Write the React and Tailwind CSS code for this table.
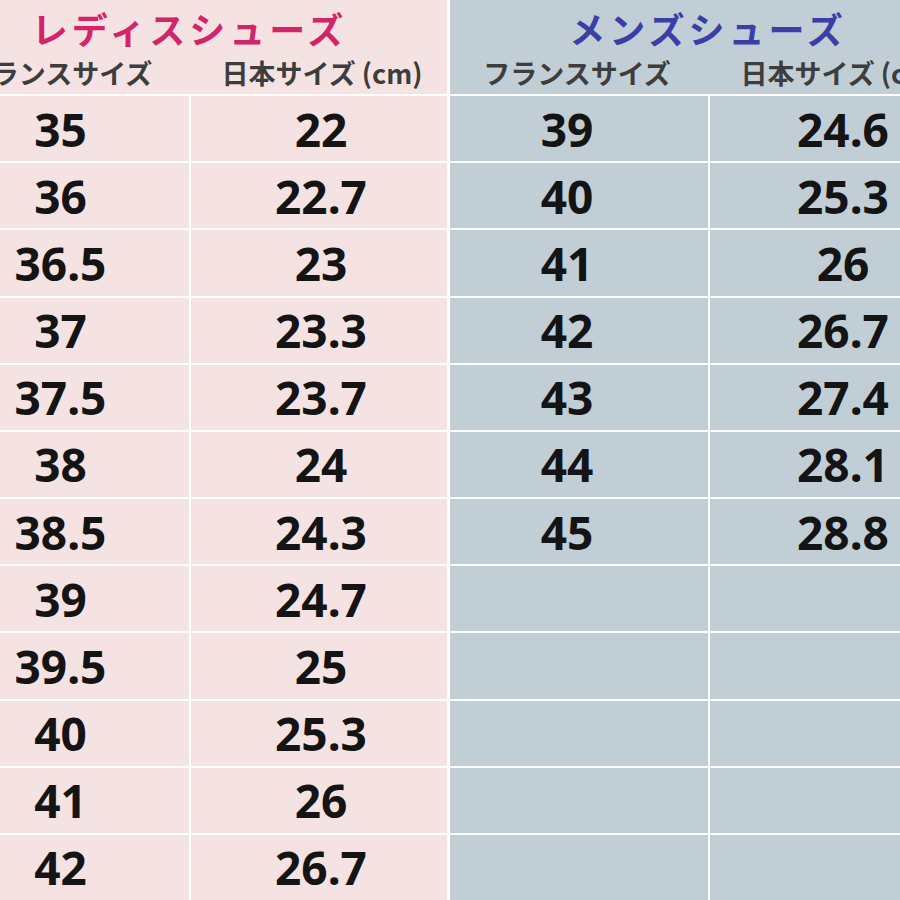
import React from 'react';

const ladies = [
  ['35', '22'], ['36', '22.7'], ['36.5', '23'], ['37', '23.3'], ['37.5', '23.7'], ['38', '24'],
  ['38.5', '24.3'], ['39', '24.7'], ['39.5', '25'], ['40', '25.3'], ['41', '26'], ['42', '26.7'],
];

const mens = [
  ['39', '24.6'], ['40', '25.3'], ['41', '26'], ['42', '26.7'], ['43', '27.4'], ['44', '28.1'], ['45', '28.8'],
  ['', ''], ['', ''], ['', ''], ['', ''], ['', ''],
];

const jp = { fontFamily: '"Noto Sans CJK JP", "Noto Sans", sans-serif' };
const num = { fontFamily: '"Noto Sans", "Open Sans", sans-serif' };

const SizeTable = ({ title, titleColor, rows, bg, widths, padA, padB }) => (
  <div className={`flex flex-col h-full shrink-0 ${bg}`} style={{ width: widths.total }}>
    <div className="h-[94px] flex flex-col" style={jp}>
      <div className={`h-[52px] flex items-end justify-center text-[36px] font-bold tracking-[4px] leading-none pb-[6px] ${titleColor}`}>
        {title}
      </div>
      <div className="flex-1 flex items-center text-[27px] font-bold text-[#3d3d3d] leading-none pb-[2px] whitespace-nowrap">
        <div className="flex justify-center pr-[4px]" style={{ width: widths.a }}>フランスサイズ</div>
        <div className="w-[2px]" />
        <div className="flex-1 flex justify-center pl-[6px]">日本サイズ (cm)</div>
      </div>
    </div>
    {rows.map(([fr, jpSize], i) => (
      <div key={i} className="flex-1 flex border-t-2 border-white text-[46px] font-bold text-[#141414] leading-none" style={num}>
        <div className={`flex items-center justify-center ${padA}`} style={{ width: widths.a }}>{fr}</div>
        <div className="w-[2px] bg-white" />
        <div className={`flex-1 flex items-center justify-center ${padB}`}>{jpSize}</div>
      </div>
    ))}
  </div>
);

export default function App() {
  return (
    <div className="w-[900px] h-[900px] overflow-hidden bg-white flex">
      <div className="flex h-full gap-[3px] ml-[-68px]">
        <SizeTable
          title="レディスシューズ"
          titleColor="text-[#d3246a]"
          rows={ladies}
          bg="bg-[#f5e3e3]"
          widths={{ total: 515, a: 257 }}
          padA=""
          padB="pl-[4px]"
        />
        <SizeTable
          title="メンズシューズ"
          titleColor="text-[#3a3ea6]"
          rows={mens}
          bg="bg-[#c1ced6]"
          widths={{ total: 516, a: 258 }}
          padA="pr-[24px]"
          padB="pl-[10px]"
        />
      </div>
    </div>
  );
}
